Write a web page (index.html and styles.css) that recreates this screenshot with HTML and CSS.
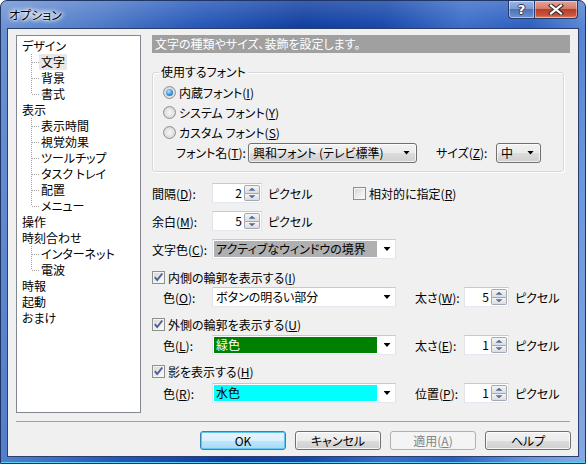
FILE: index.html
```html
<!DOCTYPE html>
<html lang="ja">
<head>
<meta charset="utf-8">
<title>オプション</title>
<link rel="stylesheet" href="styles.css">
</head>
<body>
<div class="window">
  <div class="titlebar">
    <span class="title">オプション</span>
    <div class="caption-btns">
      <div class="cbtn help">?</div>
      <div class="cbtn close">
        <svg width="16" height="11" viewBox="0 0 16 11"><path d="M3 1.5 L13 9.5 M13 1.5 L3 9.5" stroke="#3a2a2a" stroke-width="4.2" stroke-linecap="square" fill="none"/><path d="M3 1.5 L13 9.5 M13 1.5 L3 9.5" stroke="#fff" stroke-width="2.2" stroke-linecap="square" fill="none"/></svg>
      </div>
    </div>
  </div>
  <div class="client">
    <div class="main">
      <div class="tree">
        <div class="node">デザイン</div>
        <div class="children">
          <div class="leaf"><span class="sel">文字</span></div>
          <div class="leaf"><span>背景</span></div>
          <div class="leaf"><span>書式</span></div>
        </div>
        <div class="node">表示</div>
        <div class="children">
          <div class="leaf"><span>表示時間</span></div>
          <div class="leaf"><span>視覚効果</span></div>
          <div class="leaf"><span>ツールチップ</span></div>
          <div class="leaf"><span>タスク トレイ</span></div>
          <div class="leaf"><span>配置</span></div>
          <div class="leaf"><span>メニュー</span></div>
        </div>
        <div class="node">操作</div>
        <div class="node">時刻合わせ</div>
        <div class="children">
          <div class="leaf"><span>インターネット</span></div>
          <div class="leaf"><span>電波</span></div>
        </div>
        <div class="node">時報</div>
        <div class="node">起動</div>
        <div class="node">おまけ</div>
      </div>

      <div class="panel">
        <div class="header">文字の種類やサイズ、装飾を設定します。</div>

        <div class="group">
          <div class="group-title">使用するフォント</div>
          <div class="radio-row first"><span class="radio on"><span class="dot"></span></span><span>内蔵フォント(<u>I</u>)</span></div>
          <div class="radio-row"><span class="radio"></span><span>システム フォント(<u>Y</u>)</span></div>
          <div class="radio-row"><span class="radio"></span><span>カスタム フォント(<u>S</u>)</span></div>
          <div class="font-row">
            <span class="lbl-font">フォント名(<u>T</u>):</span>
            <div class="dropdown w169"><span class="dd-text">興和フォント (テレビ標準)</span><span class="arrow"></span></div>
            <span class="lbl-size">サイズ(<u>Z</u>):</span>
            <div class="dropdown w45"><span class="dd-text">中</span><span class="arrow"></span></div>
          </div>
        </div>

        <div class="row r-gap11">
          <span class="lbl60">間隔(<u>D</u>):</span>
          <div class="spin w50"><span class="val">2</span><span class="spin-btns"><span class="sb up"><span class="tri-up"></span></span><span class="sb down"><span class="tri-down"></span></span></span></div>
          <span class="pix wide">ピクセル</span>
          <span class="check"></span><span class="check-text">相対的に指定(<u>R</u>)</span>
        </div>
        <div class="row r-gap8">
          <span class="lbl60">余白(<u>M</u>):</span>
          <div class="spin w50"><span class="val">5</span><span class="spin-btns"><span class="sb up"><span class="tri-up"></span></span><span class="sb down"><span class="tri-down"></span></span></span></div>
          <span class="pix">ピクセル</span>
        </div>
        <div class="row r-gap8">
          <span class="lbl60">文字色(<u>C</u>):</span>
          <div class="combo"><span class="fill c-gray">アクティブなウィンドウの境界</span><span class="combo-btn"><span class="arrow"></span></span></div>
        </div>

        <div class="crow mt10">
          <span class="check on"><svg width="11" height="11" viewBox="0 0 11 11"><path d="M1.8 5.2 L4.2 8 L9.3 1.5" stroke="#4c5e92" stroke-width="1.9" fill="none"/></svg></span><span class="check-text">内側の輪郭を表示する(<u>I</u>)</span>
        </div>
        <div class="row mt2">
          <span class="lbl-sub">色(<u>O</u>):</span>
          <div class="combo"><span class="fill c-white">ボタンの明るい部分</span><span class="combo-btn"><span class="arrow"></span></span></div>
          <span class="lbl-right">太さ(<u>W</u>):</span>
          <div class="spin w45"><span class="val">5</span><span class="spin-btns"><span class="sb up"><span class="tri-up"></span></span><span class="sb down"><span class="tri-down"></span></span></span></div>
          <span class="pix">ピクセル</span>
        </div>

        <div class="crow mt9">
          <span class="check on"><svg width="11" height="11" viewBox="0 0 11 11"><path d="M1.8 5.2 L4.2 8 L9.3 1.5" stroke="#4c5e92" stroke-width="1.9" fill="none"/></svg></span><span class="check-text">外側の輪郭を表示する(<u>U</u>)</span>
        </div>
        <div class="row mt3">
          <span class="lbl-sub">色(<u>L</u>):</span>
          <div class="combo"><span class="fill c-green">緑色</span><span class="combo-btn"><span class="arrow"></span></span></div>
          <span class="lbl-right">太さ(<u>E</u>):</span>
          <div class="spin w45"><span class="val">1</span><span class="spin-btns"><span class="sb up"><span class="tri-up"></span></span><span class="sb down"><span class="tri-down"></span></span></span></div>
          <span class="pix">ピクセル</span>
        </div>

        <div class="crow mt8">
          <span class="check on"><svg width="11" height="11" viewBox="0 0 11 11"><path d="M1.8 5.2 L4.2 8 L9.3 1.5" stroke="#4c5e92" stroke-width="1.9" fill="none"/></svg></span><span class="check-text">影を表示する(<u>H</u>)</span>
        </div>
        <div class="row mt4">
          <span class="lbl-sub">色(<u>R</u>):</span>
          <div class="combo"><span class="fill c-cyan">水色</span><span class="combo-btn"><span class="arrow"></span></span></div>
          <span class="lbl-right">位置(<u>P</u>):</span>
          <div class="spin w45"><span class="val">1</span><span class="spin-btns"><span class="sb up"><span class="tri-up"></span></span><span class="sb down"><span class="tri-down"></span></span></span></div>
          <span class="pix">ピクセル</span>
        </div>
      </div>
    </div>

    <div class="sep"></div>

    <div class="btns">
      <div class="btn default">OK</div>
      <div class="btn">キャンセル</div>
      <div class="btn disabled">適用(<u>A</u>)</div>
      <div class="btn">ヘルプ</div>
    </div>
  </div>
</div>
</body>
</html>
```

FILE: styles.css
```css
* { box-sizing: border-box; }
html, body { margin: 0; padding: 0; }
body {
  width: 586px;
  height: 464px;
  overflow: hidden;
  background: #ffffff;
  font-family: "Noto Sans CJK JP", "Noto Sans", sans-serif;
  font-size: 12px;
  color: #000;
  font-feature-settings: "palt";
}
u { text-decoration: underline; text-underline-offset: 1px; }

/* ---------- window frame ---------- */
.window {
  width: 586px;
  height: 464px;
  border: 1px solid #1f3767;
  border-radius: 7px 7px 0 0;
  padding: 0 6px 6px 6px;
  display: flex;
  flex-direction: column;
  background:
    linear-gradient(180deg, rgba(255,255,255,0.18) 0, rgba(255,255,255,0) 28px),
    linear-gradient(100deg, #6d93d3 0%, #4f7bc9 14%, #2456b8 30%, #0d3c9f 46%, #1546aa 58%, #3a6cc8 70%, #2a5dbf 80%, #6b97dc 92%, #86a9e2 100%);
  box-shadow: inset 0 -1px 0 #5fd0f5;
}
.titlebar {
  height: 27px;
  display: flex;
  align-items: flex-start;
}
.title {
  align-self: center;
  margin-left: 1px;
  margin-top: 1px;
  padding: 0 6px 0 1px;
  line-height: 16px;
  color: #000;
  text-shadow: 0 0 6px #fff, 0 0 4px #fff, 0 0 2px #fff;
  background: radial-gradient(ellipse at center, rgba(255,255,255,0.45) 0, rgba(255,255,255,0) 70%);
}
.caption-btns {
  margin-left: auto;
  margin-right: 1px;
  display: flex;
}
.cbtn {
  height: 18px;
  border: 1px solid #233a6a;
  border-top: 0;
  display: flex;
  align-items: center;
  justify-content: center;
}
.help {
  width: 26px;
  border-right: 0;
  border-radius: 0 0 0 4px;
  background: linear-gradient(180deg, #9db6e3 0, #7c9bd3 45%, #4d73b8 50%, #6d92cf 100%);
  box-shadow: inset 0 0 0 1px rgba(255,255,255,0.45);
  color: #fff;
  font-family: "DejaVu Sans", sans-serif;
  font-weight: bold;
  font-size: 13px;
  line-height: 16px;
  text-shadow: 1px 0 0 #2a3a60, -1px 0 0 #2a3a60, 0 1px 0 #2a3a60, 0 -1px 0 #2a3a60;
}
.close {
  width: 44px;
  border-radius: 0 0 4px 0;
  background: linear-gradient(180deg, #e5a597 0, #d47a68 45%, #bc3c26 50%, #c9563e 85%, #e08a6c 100%);
  box-shadow: inset 0 0 0 1px rgba(255,255,255,0.4);
}

/* ---------- client area ---------- */
.client {
  flex: 1;
  border: 1px solid #2a3f6b;
  background: #f0f0f0;
  padding: 6px 8px 0 8px;
  display: flex;
  flex-direction: column;
}
.main {
  height: 378px;
  display: flex;
  gap: 11px;
}

/* ---------- tree ---------- */
.tree {
  width: 125px;
  height: 378px;
  border: 1px solid #828790;
  background: #fff;
  padding: 2px 0 0 5px;
  line-height: 16px;
}
.node { height: 16px; white-space: nowrap; }
.children {
  margin-left: 9px;
  background-image: repeating-linear-gradient(180deg, #a0a0a0 0 1px, transparent 1px 2px);
  background-size: 1px calc(100% - 8px);
  background-repeat: no-repeat;
  background-position: 0 0;
}
.leaf {
  height: 16px;
  display: flex;
  align-items: center;
  white-space: nowrap;
}
.leaf::before {
  content: "";
  width: 7px;
  height: 1px;
  margin-left: 1px;
  margin-right: 0;
  background-image: repeating-linear-gradient(90deg, #a0a0a0 0 1px, transparent 1px 2px);
}
.leaf span { padding: 0 2px; line-height: 16px; }
.leaf .sel { background: #e8e8e8; }

/* ---------- right panel ---------- */
.panel {
  width: 418px;
  display: flex;
  flex-direction: column;
}
.header {
  height: 18px;
  line-height: 18px;
  background: #a0a0a0;
  color: #fff;
  padding-left: 3px;
}
.group {
  margin: 19px 6px 0 0;
  border: 1px solid #d5d9dd;
  border-radius: 3px;
  box-shadow: inset 1px 1px 0 #fff, 1px 1px 0 #fff;
  padding: 0 0 8px 10px;
}
.group-title {
  width: max-content;
  margin: -8px 0 0 -4px;
  padding: 0 2px;
  line-height: 14px;
  background: #f0f0f0;
}
.radio-row {
  height: 20px;
  display: flex;
  align-items: center;
  gap: 3px;
}
.radio-row.first { margin-top: 3px; }
.radio {
  width: 13px;
  height: 13px;
  border-radius: 50%;
  border: 1px solid #8f9194;
  background: radial-gradient(circle at 50% 50%, #f6f6f6 0, #e6e6e6 45%, #c6c6c6 100%);
  display: flex;
  align-items: center;
  justify-content: center;
}
.radio .dot {
  width: 7px;
  height: 7px;
  border-radius: 50%;
  background: radial-gradient(circle at 40% 35%, #bde6fb 0, #4aa0e6 45%, #124d9f 100%);
}
.font-row {
  height: 21px;
  margin-left: 13px;
  display: flex;
  align-items: center;
}
.lbl-font { width: 72px; }
.lbl-size { width: 60px; margin-left: 19px; }
.dropdown {
  height: 20px;
  border: 1px solid #707070;
  border-radius: 3px;
  background: linear-gradient(180deg, #f2f2f2 0, #ebebeb 50%, #dddddd 50%, #cfcfcf 100%);
  box-shadow: inset 0 0 0 1px rgba(255,255,255,0.7);
  display: flex;
  align-items: center;
  padding: 0 6px 0 4px;
}
.dropdown .dd-text { flex: 1; white-space: nowrap; }
.w169 { width: 169px; }
.w45 { width: 45px; }
.w50 { width: 50px; }
.arrow {
  width: 7px;
  height: 4px;
  background: #000;
  clip-path: polygon(0 0, 100% 0, 50% 100%);
}

.row {
  height: 20px;
  display: flex;
  align-items: center;
}
.crow {
  height: 16px;
  display: flex;
  align-items: center;
}
.r-gap11 { margin-top: 11px; }
.r-gap8 { margin-top: 8px; }
.mt2 { margin-top: 2px; }
.mt3 { margin-top: 3px; }
.mt4 { margin-top: 4px; }
.mt8 { margin-top: 8px; }
.mt9 { margin-top: 9px; }
.mt10 { margin-top: 10px; }

.lbl60 { width: 60px; }
.lbl-sub { width: 49px; margin-left: 11px; }
.lbl-right { width: 49px; margin-left: 19px; }
.pix { margin-left: 6px; }
.pix.wide { width: 85px; }

.spin {
  height: 20px;
  border: 1px solid;
  border-color: #c5c8cf #e2e3ea #e3e9ef #e2e3ea;
  background: #fff;
  display: flex;
  align-items: stretch;
  padding: 1px;
}
.spin .val {
  flex: 1;
  text-align: right;
  line-height: 16px;
  padding-right: 2px;
}
.spin-btns {
  width: 16px;
  display: flex;
  flex-direction: column;
}
.sb {
  flex: 1;
  border: 1px solid #a5a8ae;
  background: linear-gradient(180deg, #f5f5f5, #dcdcdc);
  display: flex;
  align-items: center;
  justify-content: center;
}
.sb.up { border-radius: 2px 2px 0 0; }
.sb.down { border-top: 0; border-radius: 0 0 2px 2px; }
.tri-up, .tri-down {
  width: 7px;
  height: 3px;
  background: #4d6b9e;
}
.tri-up { clip-path: polygon(50% 0, 100% 100%, 0 100%); }
.tri-down { clip-path: polygon(0 0, 100% 0, 50% 100%); }

.check {
  width: 13px;
  height: 13px;
  border: 1px solid #8f8f8f;
  background: linear-gradient(135deg, #d4d4d4 0, #f2f2f2 70%, #fdfdfd 100%);
  box-shadow: inset 0 0 0 1px #f4f4f4;
  display: flex;
  align-items: center;
  justify-content: center;
}
.check svg { display: block; }
.check-text { margin-left: 3px; white-space: nowrap; }

.combo {
  width: 184px;
  height: 20px;
  border: 1px solid;
  border-color: #c5c8cf #e2e3ea #e3e9ef #e2e3ea;
  background: #fff;
  display: flex;
  align-items: stretch;
  padding: 1px;
}
.fill {
  width: 163px;
  line-height: 16px;
  padding-left: 2px;
  white-space: nowrap;
  overflow: hidden;
}
.c-gray { background: #b0b0b0; color: #000; }
.c-white { background: #fff; color: #000; }
.c-green { background: #008000; color: #fff; }
.c-cyan { background: #00ffff; color: #000; }
.combo-btn {
  flex: 1;
  display: flex;
  align-items: center;
  justify-content: center;
  padding-left: 3px;
}

/* ---------- bottom ---------- */
.sep {
  height: 1px;
  margin-top: 8px;
  background: #a0a0a0;
}
.btns {
  margin-top: 9px;
  margin-right: -1px;
  display: flex;
  justify-content: flex-end;
  gap: 9px;
}
.btn {
  width: 86px;
  height: 19px;
  border: 1px solid #707070;
  border-radius: 3px;
  background: linear-gradient(180deg, #f2f2f2 0, #ebebeb 50%, #dddddd 50%, #cfcfcf 100%);
  box-shadow: inset 0 0 0 1px rgba(255,255,255,0.75);
  display: flex;
  align-items: center;
  justify-content: center;
  line-height: 16px;
}
.btn.default {
  border-color: #3c7fb1;
  background: linear-gradient(180deg, #eaf6fd 0, #d9f0fc 50%, #bee6fd 50%, #a7d9f5 100%);
  box-shadow: inset 0 0 0 1px #5ec8f0;
}
.btn.disabled {
  border-color: #adb2b5;
  background: #f4f4f4;
  box-shadow: none;
  color: #838383;
}
```
